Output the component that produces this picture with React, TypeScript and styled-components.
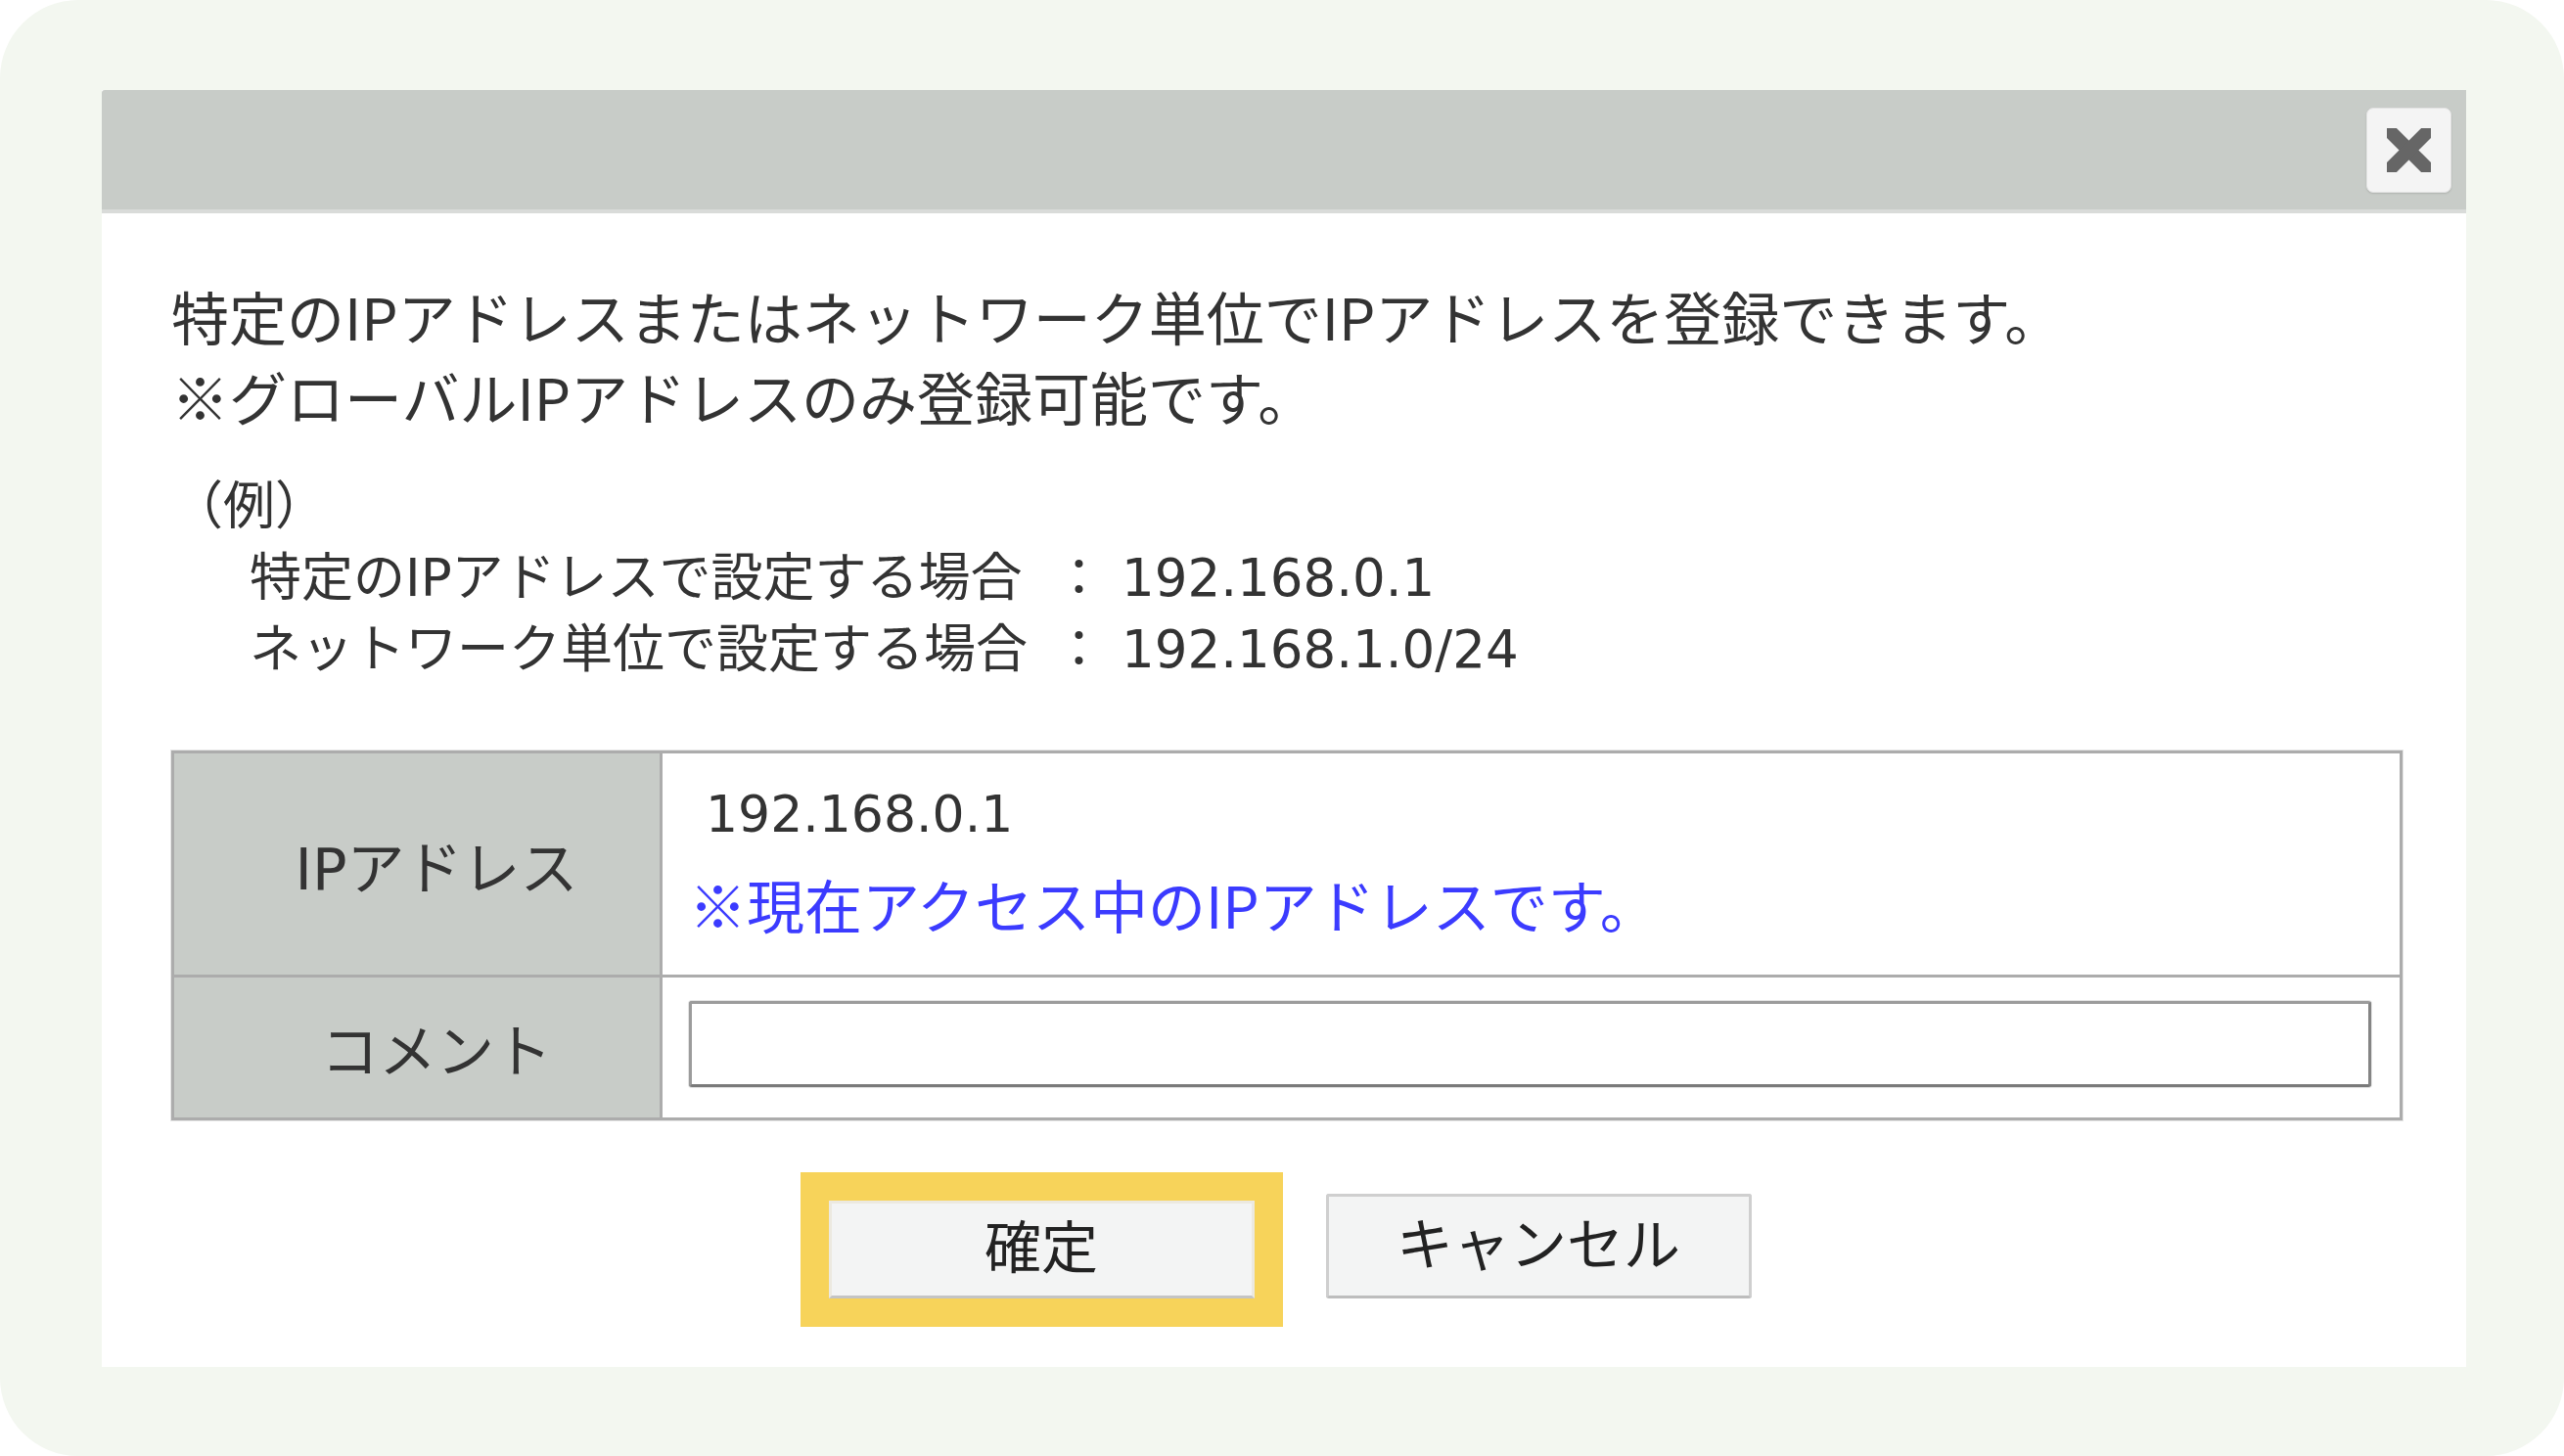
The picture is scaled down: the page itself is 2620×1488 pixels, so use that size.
import React from 'react';
import styled, { createGlobalStyle } from 'styled-components';

const GlobalStyle = createGlobalStyle`
  html, body {
    margin: 0;
    padding: 0;
    background: #ffffff;
  }
  body {
    font-family: "DejaVu Sans", "Noto Sans CJK JP", sans-serif;
    color: #333333;
  }
  *, *::before, *::after {
    box-sizing: border-box;
  }
`;

const Frame = styled.div`
  width: 2620px;
  height: 1488px;
  background: #f3f7f0;
  border-radius: 80px;
  padding: 92px 100px 0 104px;
`;

const Dialog = styled.section`
  background: #ffffff;
  display: flex;
  flex-direction: column;
`;

const TitleBar = styled.header`
  height: 126px;
  background: #c8ccc8;
  border-bottom: 4px solid #d9dbd9;
  border-top-left-radius: 3px;
  display: flex;
  align-items: center;
  justify-content: flex-end;
  padding-right: 15px;
`;

const CloseButton = styled.button`
  width: 87px;
  height: 87px;
  padding: 0;
  border: 1px solid #e2e2e2;
  border-radius: 7px;
  background: #f4f4f4;
  box-shadow: 0 1px 2px rgba(0, 0, 0, 0.12);
  display: flex;
  align-items: center;
  justify-content: center;
  cursor: pointer;
`;

const Body = styled.div`
  padding: 64px 65px 70px 71px;
  display: flex;
  flex-direction: column;
`;

const Intro = styled.p`
  margin: 0;
  font-family: "Noto Sans CJK JP", "DejaVu Sans", sans-serif;
  font-size: 59px;
  line-height: 82px;
  white-space: nowrap;
`;

const Example = styled.div`
  margin-top: 35px;
  font-size: 53px;
  line-height: 73px;
  white-space: nowrap;
`;

const ExampleGrid = styled.div`
  display: grid;
  grid-template-columns: max-content max-content max-content;
  padding-left: 80px;
`;

const Colon = styled.span`
  margin: 0 17px 0 26px;
`;

const FormTable = styled.div`
  margin-top: 67px;
  display: grid;
  grid-template-columns: 499px 1fr;
  border: 3px solid #acacac;
  box-shadow: 0 0 0 1px #e6e6e6;
`;

const LabelCell = styled.div<{ $last?: boolean }>`
  background: #c8ccc8;
  border-right: 3px solid #acacac;
  border-bottom: ${(p) => (p.$last ? 'none' : '3px solid #acacac')};
  display: flex;
  align-items: center;
  justify-content: center;
  padding-left: 40px;
  font-size: 59px;
  color: #333333;
  white-space: nowrap;
`;

const ValueCell = styled.div<{ $last?: boolean }>`
  border-bottom: ${(p) => (p.$last ? 'none' : '3px solid #acacac')};
  padding: ${(p) => (p.$last ? '24px 29px 31px 27px' : '17px 29px 27px 27px')};
  display: flex;
  flex-direction: column;
`;

const IpValue = styled.div`
  font-size: 52px;
  line-height: 91px;
  padding-left: 17px;
  color: #333333;
`;

const Notice = styled.div`
  font-family: "Noto Sans CJK JP", "DejaVu Sans", sans-serif;
  font-size: 59px;
  line-height: 91px;
  color: #3b3bff;
  white-space: nowrap;
`;

const CommentInput = styled.input`
  width: 100%;
  height: 88px;
  border: 3px solid #9c9c9c;
  border-bottom-color: #7a7a7a;
  border-right-color: #858585;
  border-radius: 3px;
  box-shadow: 0 0 0 1px #e4e4e4;
  background: #ffffff;
  font-size: 48px;
  padding: 0 16px;
  outline: none;
`;

const ButtonRow = styled.div`
  margin-top: 75px;
  display: flex;
  align-items: flex-end;
  justify-content: center;
  gap: 73px;
  padding-left: 6px;
`;

const ActionButton = styled.button<{ $highlight?: boolean }>`
  width: 435px;
  height: ${(p) => (p.$highlight ? '100px' : '107px')};
  padding: 0 0 12px 0;
  background: #f3f4f4;
  border: 3px solid ${(p) => (p.$highlight ? '#ece9e0' : '#cfcfcf')};
  border-bottom-color: ${(p) => (p.$highlight ? '#c4c4c4' : '#bdbdbd')};
  border-radius: ${(p) => (p.$highlight ? '0' : '3px')};
  font-family: "Noto Sans CJK JP", "DejaVu Sans", sans-serif;
  font-size: 58px;
  line-height: 1;
  color: #222222;
  cursor: pointer;
  outline: ${(p) => (p.$highlight ? '29px solid #f7d35a' : 'none')};
  outline-offset: 0;
`;

const CloseIcon = () => (
  <svg width="45" height="45" viewBox="0 0 45 45" aria-hidden="true">
    <defs>
      <clipPath id="close-clip">
        <rect x="0" y="0" width="45" height="45" />
      </clipPath>
    </defs>
    <g clipPath="url(#close-clip)" stroke="#666666" strokeWidth="14">
      <line x1="-4" y1="-4" x2="49" y2="49" />
      <line x1="49" y1="-4" x2="-4" y2="49" />
    </g>
  </svg>
);

export default function App() {
  return (
    <>
      <GlobalStyle />
      <Frame>
        <Dialog>
          <TitleBar>
            <CloseButton aria-label="閉じる">
              <CloseIcon />
            </CloseButton>
          </TitleBar>
          <Body>
            <Intro>
              特定のIPアドレスまたはネットワーク単位でIPアドレスを登録できます。
              <br />
              ※グローバルIPアドレスのみ登録可能です。
            </Intro>
            <Example>
              <div>（例）</div>
              <ExampleGrid>
                <span>特定のIPアドレスで設定する場合</span>
                <Colon>：</Colon>
                <span>192.168.0.1</span>
                <span>ネットワーク単位で設定する場合</span>
                <Colon>：</Colon>
                <span>192.168.1.0/24</span>
              </ExampleGrid>
            </Example>
            <FormTable>
              <LabelCell>IPアドレス</LabelCell>
              <ValueCell>
                <IpValue>192.168.0.1</IpValue>
                <Notice>※現在アクセス中のIPアドレスです。</Notice>
              </ValueCell>
              <LabelCell $last>コメント</LabelCell>
              <ValueCell $last>
                <CommentInput type="text" aria-label="コメント" />
              </ValueCell>
            </FormTable>
            <ButtonRow>
              <ActionButton $highlight>確定</ActionButton>
              <ActionButton>キャンセル</ActionButton>
            </ButtonRow>
          </Body>
        </Dialog>
      </Frame>
    </>
  );
}
